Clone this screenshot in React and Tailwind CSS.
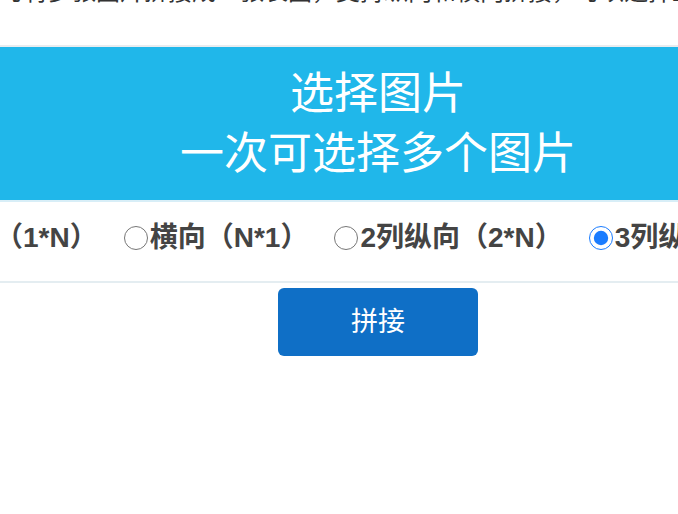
const FONT = { fontFamily: '"Liberation Sans", "Noto Sans CJK SC", sans-serif' };

const options = [
  { label: '纵向（1*N）', checked: false },
  { label: '横向（N*1）', checked: false },
  { label: '2列纵向（2*N）', checked: false },
  { label: '3列纵向（3*N）', checked: true },
];

export default function App() {
  return (
    <div className="w-full overflow-hidden">
      <div className="w-[756px] min-h-[514px] bg-white" style={FONT}>
        {/* intro text, only its lower edge shows */}
        <div className="h-[45px]">
          <div className="h-[4px] overflow-hidden flex items-end">
            <p className="text-[24px] leading-[24px] text-[#333] whitespace-nowrap">
              可将多张图片拼接成一张长图，支持纵向和横向拼接，可以选择上下拼接或左右拼接图片，不限数量
            </p>
          </div>
        </div>
        <div className="h-[2px] bg-[#e9ecef]" />

        {/* picker */}
        <div className="h-[153px] bg-[#20b7ea] flex flex-col items-center justify-center text-white text-[44px] leading-[60px]">
          <div>选择图片</div>
          <div>一次可选择多个图片</div>
        </div>
        <div className="h-[2px] bg-[#d8eef7]" />

        {/* layout options */}
        <div className="h-[79px] pb-[8px] flex items-center justify-center whitespace-nowrap">
          {options.map((o) => (
            <label key={o.label} className="flex items-center gap-[2px] mr-[26px] text-[28px] font-bold text-[#444] shrink-0">
              <input
                type="radio"
                name="mode"
                defaultChecked={o.checked}
                className="w-[24px] h-[24px] m-0 accent-[#1a7cff]"
              />
              {o.label}
            </label>
          ))}
        </div>
        <div className="h-[2px] bg-[#e4edf1]" />

        <div className="flex justify-center pt-[5px]">
          <button className="w-[200px] h-[68px] rounded-[6px] bg-[#0f6fc6] text-white text-[27px]">
            拼接
          </button>
        </div>
      </div>
    </div>
  );
}
